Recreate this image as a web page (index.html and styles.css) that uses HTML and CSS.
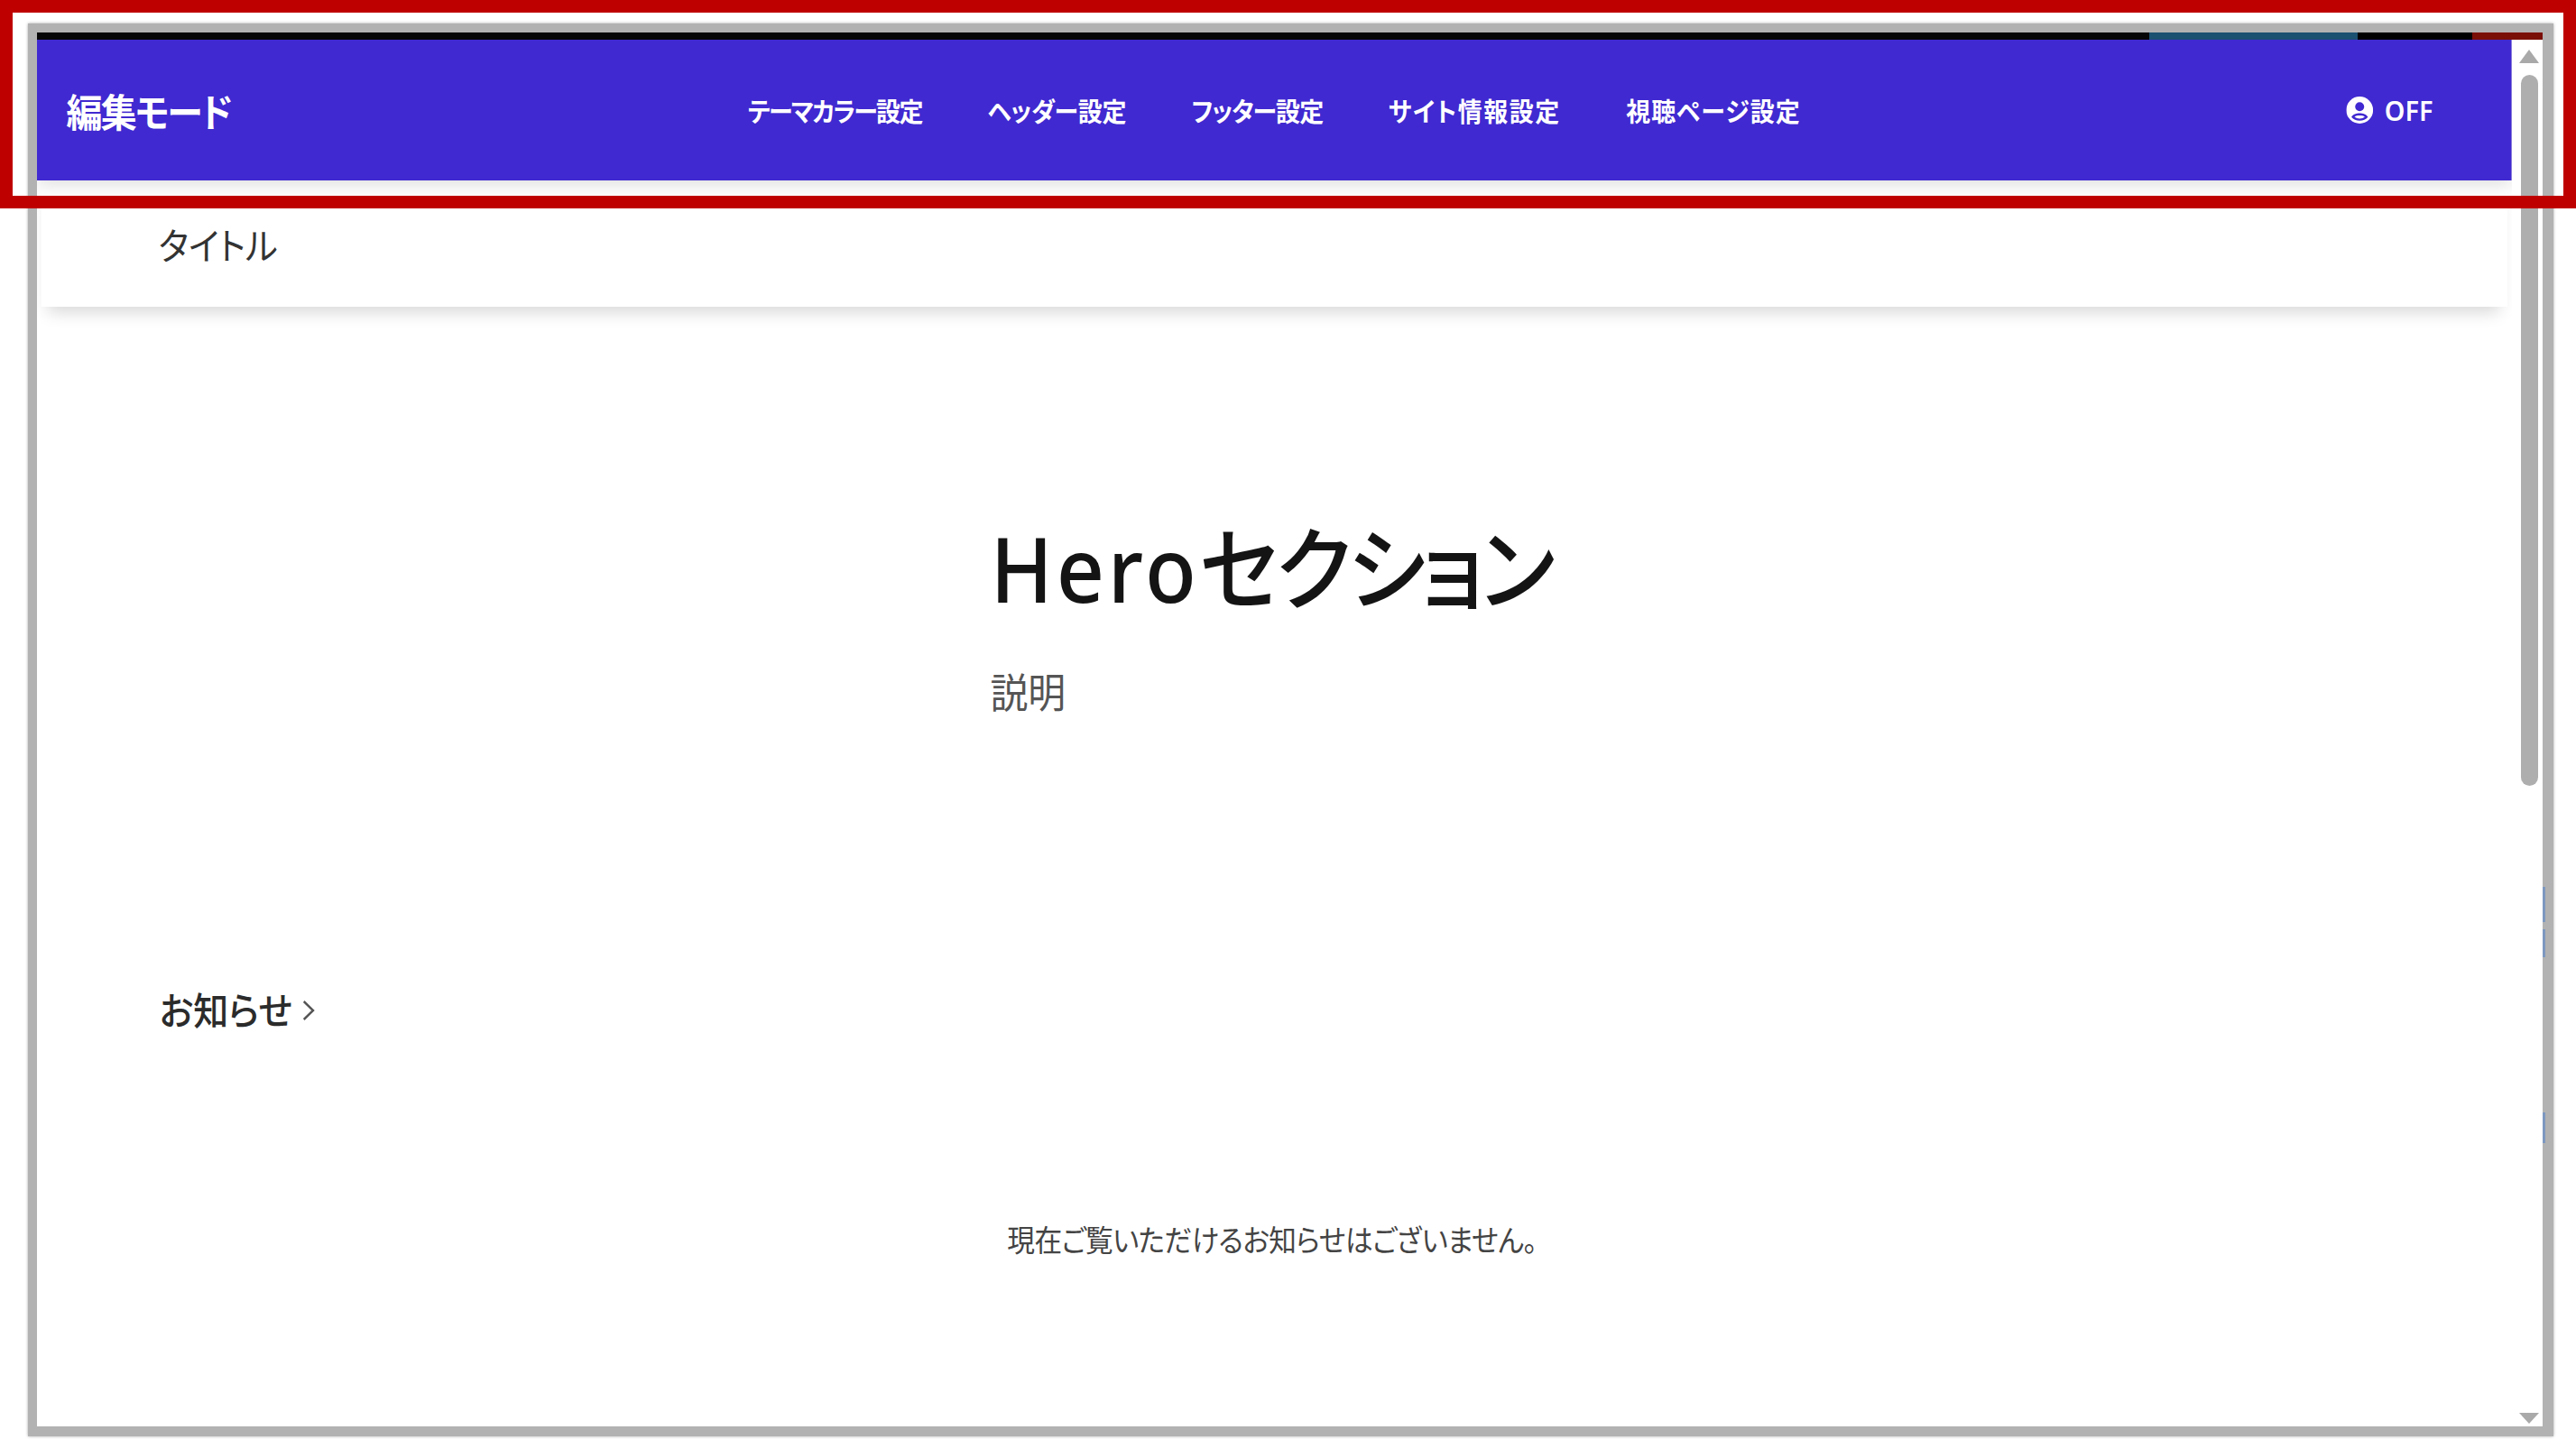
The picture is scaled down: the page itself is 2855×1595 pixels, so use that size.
FILE: index.html
```html
<!DOCTYPE html>
<html lang="ja">
<head>
  <meta charset="UTF-8">
  <meta name="viewport" content="width=device-width, initial-scale=1.0">
  <link rel="stylesheet" href="styles.css">
  <title>編集モード</title>
</head>
<body>

  <div class="window">
    <div class="strip">
      <div class="stripDark"></div>
      <div class="stripTeal"></div>
      <div class="stripBlack"></div>
      <div class="stripRed"></div>
    </div>
    <div class="frame">
      <div class="viewport">
        <div class="page">
          <header class="editBar">
            <div class="brand">編集モード</div>
            <nav class="menu">
              <a>テーマカラー設定</a>
              <a>ヘッダー設定</a>
              <a>フッター設定</a>
              <a>サイト情報設定</a>
              <a>視聴ページ設定</a>
            </nav>
            <div class="toggle">
              <svg class="userIcon" viewBox="0 0 24 24" preserveAspectRatio="none">
                <circle cx="12" cy="12" r="12" fill="#fff"/>
                <circle cx="12" cy="9" r="4" fill="#4029d0"/>
                <path d="M4.6 18.2C6 15.6 9 14.8 12 14.8s6 .8 7.4 3.4C17.6 20.4 15 21.4 12 21.4s-5.6-1-7.4-3.2z" fill="#4029d0"/>
                <path d="M7.4 18c1-1 2.8-1.3 4.6-1.3s3.600.3 4.600 1.300c-1.200 1-2.800 1.500-4.600 1.500s-3.400-.5-4.600-1.500z" fill="#fff"/>
              </svg>
              <span>OFF</span>
            </div>
          </header>

          <div class="siteTitle">タイトル</div>

          <section class="hero">
            <h1>Hero<span class="heroKana">セクション</span></h1>
            <p>説明</p>
          </section>

          <section class="news">
            <a class="newsLink">お知らせ
              <svg class="chevron" viewBox="0 0 16 24"><path d="M2 2l11 10L2 22" fill="none" stroke="#555" stroke-width="2.600"/></svg>
            </a>
            <p class="empty">現在ご覧いただけるお知らせはございません。</p>
          </section>
        </div>
      </div>

      <div class="scrollbar">
        <div class="arrowUp"></div>
        <div class="thumb"></div>
        <div class="arrowDown"></div>
      </div>
    </div>

    <div class="tick tickOne"></div>
    <div class="tick tickTwo"></div>
    <div class="tick tickThree"></div>
  </div>

  <div class="redFrame"></div>

</body>
</html>
```

FILE: styles.css
```css
* {
  margin: 0;
  padding: 0;
  box-sizing: border-box;
}

html,
body {
  height: 1595px;
  overflow: hidden;
}

body {
  position: relative;
  background-color: #fff;
  padding: 26px 25px 3px 31px;
  font-family: "Noto Sans", "Noto Sans CJK JP", sans-serif;
  font-feature-settings: "palt";
  color: #1a1a1a;
}

.redFrame {
  position: absolute;
  top: 0;
  left: 0;
  width: 2855px;
  height: 231px;
  border: 14px solid #bf0000;
  pointer-events: none;
}

.window {
  position: relative;
  height: 1566px;
  display: flex;
  flex-direction: column;
  border: 10px solid #b2b2b2;
  border-right-width: 12px;
  border-bottom-width: 11px;
  box-shadow: 0 0 3px rgba(0, 0, 0, .35);
}

.strip {
  height: 8px;
  flex: none;
  display: flex;
}

.stripDark {
  flex: 1;
  background: #060606;
}

.stripTeal {
  width: 231px;
  background: #1a5070;
}

.stripBlack {
  width: 127px;
  background: #000;
}

.stripRed {
  width: 78px;
  background: #7a0f08;
}

.frame {
  flex: 1;
  display: flex;
  min-height: 0;
}

.viewport {
  flex: 1;
  min-width: 0;
  overflow: hidden;
  background: #fff;
}

/* the capture is squeezed sideways, so the whole page is too */
.page {
  width: 107.527%;
  transform: scaleX(.93);
  transform-origin: left top;
}

.editBar {
  position: relative;
  z-index: 1;
  height: 156px;
  display: flex;
  align-items: center;
  background: #4029d0;
  color: #fff;
  padding: 0 94px 0 35px;
  box-shadow: 0 4px 20px rgba(0, 0, 0, .14);
}

.brand {
  font-size: 43px;
  font-weight: 700;
  letter-spacing: -2px;
}

.menu {
  display: flex;
  gap: 78px;
  margin-left: 616px;
  font-size: 29px;
  font-weight: 700;
}

.menu a:nth-child(1) {
  letter-spacing: -1.700px;
}

.menu a:nth-child(2) {
  letter-spacing: -.300px;
}

.menu a:nth-child(3) {
  letter-spacing: -1px;
}

.menu a:nth-child(4) {
  letter-spacing: 1.600px;
}

.menu a:nth-child(5) {
  letter-spacing: 1.100px;
}

.toggle {
  margin-left: auto;
  display: flex;
  align-items: center;
  gap: 14px;
  font-size: 31px;
  font-weight: 600;
}

.userIcon {
  width: 32px;
  height: 30px;
}

.siteTitle {
  height: 140px;
  margin: 0 5px;
  padding: 0 0 0 140px;
  display: flex;
  align-items: center;
  font-size: 41px;
  color: #333;
  background: #fff;
  box-shadow: 0 14px 18px -8px rgba(0, 0, 0, .16);
}

.hero {
  padding: 229px 0 0 1136px;
}

.hero h1 {
  font-size: 100px;
  font-weight: 500;
  letter-spacing: 4px;
  line-height: 120px;
  color: #141414;
}

.heroKana {
  letter-spacing: -4.300px;
}

.hero p {
  margin-top: 49px;
  font-size: 45px;
  line-height: 60px;
  color: #555;
}

.news {
  padding: 0 0 0 146px;
}

.newsLink {
  margin-top: 292px;
  display: flex;
  align-items: center;
  gap: 12px;
  font-size: 42px;
  font-weight: 500;
  line-height: 60px;
  color: #2b2b2b;
}

.chevron {
  width: 16px;
  height: 24px;
}

.empty {
  margin-top: 200px;
  margin-left: -152px;
  text-align: center;
  font-size: 33px;
  letter-spacing: -.570px;
  line-height: 50px;
  color: #444;
}

.scrollbar {
  width: 34px;
  flex: none;
  display: flex;
  flex-direction: column;
  align-items: center;
  background: #fff;
  border-top-right-radius: 6px;
  padding: 11px 5px 3px 9px;
}

.arrowUp,
.arrowDown {
  flex: none;
  width: 0;
  height: 0;
  border-left: 11px solid transparent;
  border-right: 11px solid transparent;
}

.arrowUp {
  border-bottom: 15px solid #a9a9a9;
}

.arrowDown {
  margin-top: auto;
  border-top: 12px solid #a9a9a9;
}

.thumb {
  flex: none;
  width: 19px;
  height: 788px;
  margin-top: 13px;
  background: #aeaeae;
  border-radius: 10px;
}

.tick {
  position: absolute;
  right: -3px;
  width: 3px;
  background: #7d98c0;
}

.tickOne {
  top: 947px;
  height: 39px;
}

.tickTwo {
  top: 994px;
  height: 31px;
}

.tickThree {
  top: 1197px;
  height: 34px;
}
```
